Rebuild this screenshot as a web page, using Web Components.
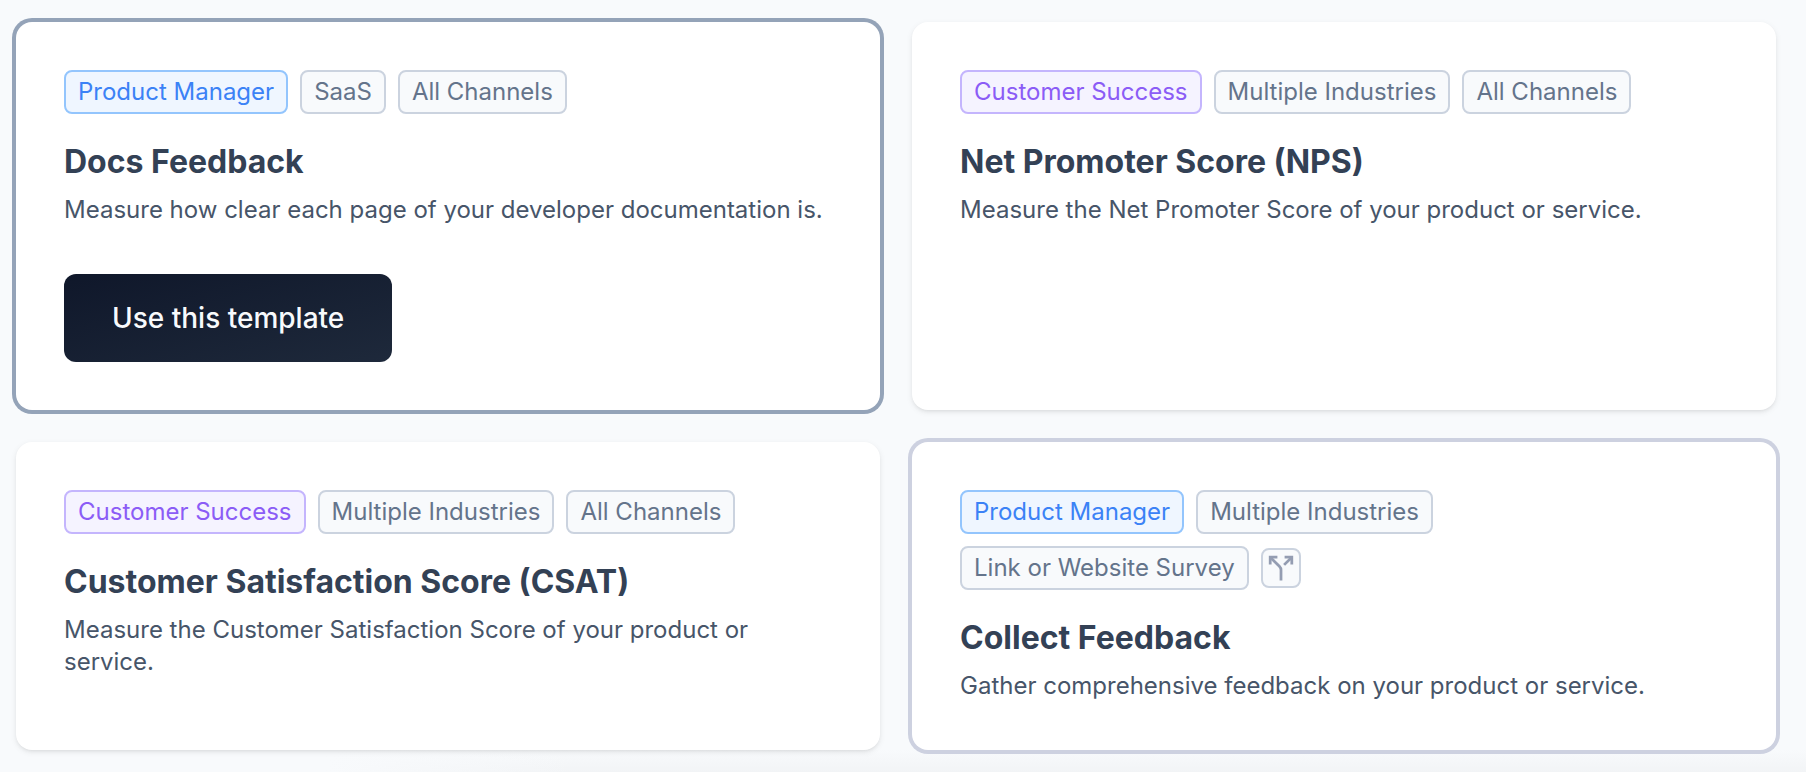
<!DOCTYPE html>
<html lang="en">
<head>
<meta charset="utf-8">
<meta name="viewport" content="width=device-width, initial-scale=1">
<title>Survey templates</title>
<style>
  html { min-height: 100%; background: #f8fafc; }
  body {
    margin: 0;
    font-family: Inter, "Liberation Sans", sans-serif;
    color: #475569;
  }
</style>
</head>
<body>

<template-gallery>
  <template-card state="selected">
    <template-tag slot="tags" tone="blue">Product Manager</template-tag>
    <template-tag slot="tags">SaaS</template-tag>
    <template-tag slot="tags">All Channels</template-tag>
    <span slot="title">Docs Feedback</span>
    Measure how clear each page of your developer documentation is.
    <use-button slot="action">Use this template</use-button>
  </template-card>

  <template-card>
    <template-tag slot="tags" tone="purple">Customer Success</template-tag>
    <template-tag slot="tags">Multiple Industries</template-tag>
    <template-tag slot="tags">All Channels</template-tag>
    <span slot="title">Net Promoter Score (NPS)</span>
    Measure the Net Promoter Score of your product or service.
  </template-card>

  <template-card>
    <template-tag slot="tags" tone="purple">Customer Success</template-tag>
    <template-tag slot="tags">Multiple Industries</template-tag>
    <template-tag slot="tags">All Channels</template-tag>
    <span slot="title">Customer Satisfaction Score (CSAT)</span>
    Measure the Customer Satisfaction Score of your product or service.
  </template-card>

  <template-card state="hovered">
    <template-tag slot="tags" tone="blue">Product Manager</template-tag>
    <template-tag slot="tags">Multiple Industries</template-tag>
    <template-tag slot="tags">Link or Website Survey</template-tag>
    <branching-badge slot="tags"></branching-badge>
    <span slot="title">Collect Feedback</span>
    Gather comprehensive feedback on your product or service.
  </template-card>
</template-gallery>

<script>
  const define = (name, markup) => {
    const template = document.createElement('template');
    template.innerHTML = markup;
    customElements.define(name, class extends HTMLElement {
      constructor() {
        super();
        this.attachShadow({ mode: 'open' }).append(template.content.cloneNode(true));
      }
    });
  };

  define('template-gallery', `
    <style>
      :host { display: block; }
      main {
        display: grid;
        grid-template-columns: repeat(2, minmax(0, 1fr));
        gap: 32px;
        padding: 22px 30px 22px 16px;
        background:
          linear-gradient(to right, #f8fafc 18%, transparent 32%),
          linear-gradient(to top, #f2f4f6, #f8fafc 22px);
      }
    </style>
    <main><slot></slot></main>
  `);

  define('template-card', `
    <style>
      :host { display: grid; }
      article {
        padding: 48px;
        border-radius: 16px;
        background: #fff;
        box-shadow: 0 2px 6px rgb(0 0 0 / .08), 0 2px 4px -2px rgb(0 0 0 / .1);
      }
      :host([state="selected"]) article { box-shadow: 0 0 0 4px #94a3b8; }
      :host([state="hovered"]) article { box-shadow: 0 0 0 4px #cdd1e0; }
      .tags {
        display: flex;
        flex-wrap: wrap;
        align-items: center;
        gap: 12px;
        max-width: 680px;
      }
      :host([state="hovered"]) .tags { max-width: 500px; }
      h3 {
        margin: 24px 0 8px;
        font-size: 32px;
        line-height: 48px;
        font-weight: 700;
        color: #334155;
      }
      p {
        margin: 0;
        font-size: 24px;
        line-height: 32px;
        color: #475569;
      }
      ::slotted(use-button) { margin-top: 48px; }
    </style>
    <article>
      <div class="tags"><slot name="tags"></slot></div>
      <h3><slot name="title"></slot></h3>
      <p><slot></slot></p>
      <slot name="action"></slot>
    </article>
  `);

  define('template-tag', `
    <style>
      :host {
        display: block;
        padding: 4px 12px;
        border: 2px solid #cbd3df;
        border-radius: 8px;
        background: #f8fafc;
        color: #64748b;
        font-size: 24px;
        line-height: 32px;
        white-space: nowrap;
      }
      :host([tone="blue"]) { border-color: #93c5fd; background: #eff6ff; color: #3b82f6; }
      :host([tone="purple"]) { border-color: #c4b5fd; background: #f5f3ff; color: #8b5cf6; }
    </style>
    <slot></slot>
  `);

  define('branching-badge', `
    <style>
      :host {
        display: block;
        padding: 6px;
        border: 2px solid #cbd3df;
        border-radius: 8px;
        background: #f8fafc;
        color: #949db2;
      }
      svg { display: block; width: 24px; height: 24px; overflow: visible; }
    </style>
    <svg viewBox="2 2 20 20" fill="none" stroke="currentColor" stroke-width="2.3" role="img" aria-label="Branching logic">
      <path d="M9 3H3v6"/>
      <path d="M3 3l7.8 7.8Q12 12 12 13.7V22.4"/>
      <path d="M15 3h6v6"/>
      <path d="M14.6 9.4L21 3"/>
    </svg>
  `);

  define('use-button', `
    <style>
      :host { display: block; }
      button {
        display: block;
        padding: 24px 48px;
        border: 0;
        border-radius: 12px;
        background: linear-gradient(to bottom right, #0f172a, #1e293b);
        color: #f8fafc;
        font: 500 28px/40px Inter, "Liberation Sans", sans-serif;
        cursor: pointer;
      }
    </style>
    <button type="button"><slot></slot></button>
  `);
</script>
</body>
</html>
